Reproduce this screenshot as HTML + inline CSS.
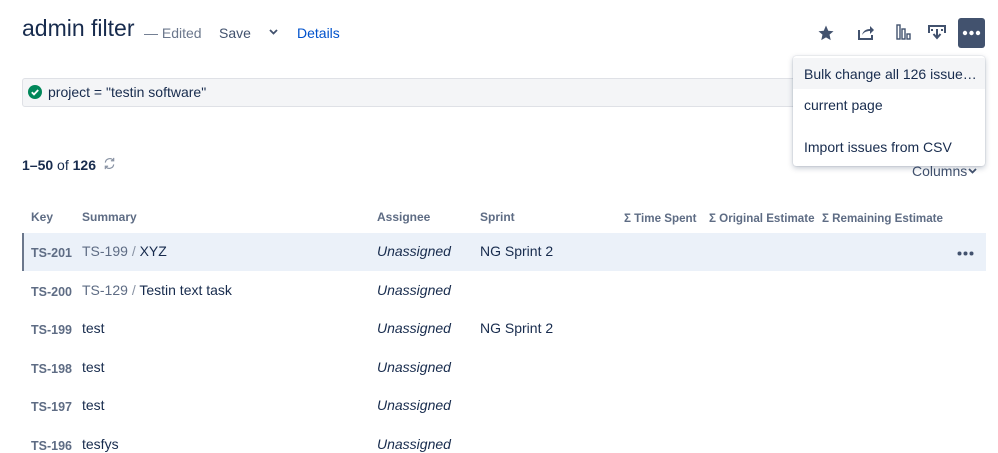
<!DOCTYPE html>
<html><head><style>
*{margin:0;padding:0;box-sizing:border-box}
body{width:998px;height:444px;overflow:hidden;background:#fff;font-family:"Liberation Sans",sans-serif;color:#172b4d;position:relative}
.a{position:absolute;white-space:nowrap}
.k{font-size:12.5px;color:#5e6c84;font-weight:bold}
.s{font-size:14px}
.u{font-size:14px;font-style:italic}
.h{font-size:12px;color:#5e6c84;font-weight:bold}
.h2{font-size:11.6px;color:#5e6c84;font-weight:bold}
</style></head><body>
<div class="a" style="left:22px;top:15px;font-size:23px;color:#172b4d">admin filter</div>
<div class="a" style="left:144px;top:25px;font-size:14px;color:#6b778c">— Edited</div>
<div class="a" style="left:219px;top:25px;font-size:14px;color:#42526e">Save</div>
<svg class="a" style="left:269px;top:29px" width="9" height="6" viewBox="0 0 9 6"><path d="M1 1l3.5 3.5L8 1" stroke="#42526e" stroke-width="1.8" fill="none"/></svg>
<div class="a" style="left:297px;top:25px;font-size:14px;color:#0052cc">Details</div>

<svg class="a" style="left:817px;top:24px" width="18" height="18" viewBox="0 0 24 24"><path d="M12 2l3 7 7 .6-5.3 4.6 1.6 7.3L12 17.8 5.7 21.5l1.6-7.3L2 9.6 9 9z" fill="#42526e"/></svg>
<svg class="a" style="left:857px;top:24px" width="18" height="17" viewBox="0 0 18 17"><path d="M2 6v9h13v-4" stroke="#42526e" stroke-width="2" fill="none"/><path d="M5 11c1-4 4-6 8-6V2l4 4-4 4V7c-3 0-6 1-8 4z" fill="#42526e"/></svg>
<svg class="a" style="left:896px;top:24px" width="16" height="16" viewBox="0 0 16 16"><g stroke="#42526e" stroke-width="1.4" fill="none"><rect x="1" y="1" width="3" height="14"/><rect x="6" y="5" width="3" height="10"/><rect x="11" y="10" width="3" height="5"/></g></svg>
<svg class="a" style="left:928px;top:24px" width="18" height="17" viewBox="0 0 18 17"><path d="M1 9V2h16v7M5 6h-2M15 6h-2" stroke="#42526e" stroke-width="2" fill="none"/><path d="M9 5v8M5.5 10L9 14l3.5-4" stroke="#42526e" stroke-width="2" fill="none"/></svg>
<div class="a" style="left:958px;top:18px;width:27px;height:30px;background:#42526e;border-radius:3px"></div>
<svg class="a" style="left:962px;top:30px" width="19" height="6" viewBox="0 0 19 6"><g fill="#fff"><circle cx="3" cy="3" r="2.2"/><circle cx="9.5" cy="3" r="2.2"/><circle cx="16" cy="3" r="2.2"/></g></svg>

<div class="a" style="left:22px;top:78px;width:780px;height:29px;background:#f4f5f7;border:1px solid #dfe1e6;border-radius:3px"></div>
<svg class="a" style="left:28px;top:85px" width="14" height="14" viewBox="0 0 14 14"><circle cx="7" cy="7" r="7" fill="#00875a"/><path d="M3.8 7.2l2.2 2.2 4.2-4.4" stroke="#fff" stroke-width="1.8" fill="none"/></svg>
<div class="a" style="left:48px;top:84px;font-size:14px">project = "testin software"</div>

<div class="a" style="left:22px;top:157px;font-size:14px"><b>1–50</b> of <b>126</b></div>
<svg class="a" style="left:103px;top:157px" width="13" height="13" viewBox="0 0 14 14"><path d="M2.5 6a4.8 4.8 0 0 1 8.5-2.5M11.5 8a4.8 4.8 0 0 1-8.5 2.5" stroke="#8993a4" stroke-width="1.3" fill="none"/><path d="M11.5 1v3h-3M2.5 13v-3h3" stroke="#8993a4" stroke-width="1.3" fill="none"/></svg>
<div class="a" style="left:912px;top:163px;font-size:14px;color:#42526e">Columns</div>
<svg class="a" style="left:968px;top:168px" width="9" height="6" viewBox="0 0 9 6"><path d="M1 1l3.5 3.5L8 1" stroke="#42526e" stroke-width="1.8" fill="none"/></svg>

<div class="a h" style="left:31px;top:210px">Key</div>
<div class="a h" style="left:82px;top:210px">Summary</div>
<div class="a h" style="left:377px;top:210px">Assignee</div>
<div class="a h" style="left:480px;top:210px">Sprint</div>
<div class="a h2" style="left:624px;top:212px">Σ Time Spent</div>
<div class="a h2" style="left:709px;top:212px">Σ Original Estimate</div>
<div class="a h2" style="left:822px;top:212px">Σ Remaining Estimate</div>

<div class="a" style="left:22px;top:233px;width:964px;height:38px;background:#ebf1f9;border-left:2px solid #6b778c"></div>
<div class="a k" style="left:31px;top:246px">TS-201</div><div class="a s" style="left:82px;top:243px"><span style="color:#5e6c84">TS-199</span> <span style="color:#8993a4">/</span> XYZ</div><div class="a u" style="left:377px;top:243px">Unassigned</div><div class="a s" style="left:480px;top:243px">NG Sprint 2</div>
<svg class="a" style="left:957px;top:251px" width="17" height="5" viewBox="0 0 17 5"><g fill="#42526e"><circle cx="2.5" cy="2.5" r="2"/><circle cx="8.5" cy="2.5" r="2"/><circle cx="14.5" cy="2.5" r="2"/></g></svg>
<div class="a k" style="left:31px;top:285px">TS-200</div><div class="a s" style="left:82px;top:282px"><span style="color:#5e6c84">TS-129</span> <span style="color:#8993a4">/</span> Testin text task</div><div class="a u" style="left:377px;top:282px">Unassigned</div>
<div class="a k" style="left:31px;top:323px">TS-199</div><div class="a s" style="left:82px;top:320px">test</div><div class="a u" style="left:377px;top:320px">Unassigned</div><div class="a s" style="left:480px;top:320px">NG Sprint 2</div>
<div class="a k" style="left:31px;top:362px">TS-198</div><div class="a s" style="left:82px;top:359px">test</div><div class="a u" style="left:377px;top:359px">Unassigned</div>
<div class="a k" style="left:31px;top:400px">TS-197</div><div class="a s" style="left:82px;top:397px">test</div><div class="a u" style="left:377px;top:397px">Unassigned</div>
<div class="a k" style="left:31px;top:439px">TS-196</div><div class="a s" style="left:82px;top:436px">tesfys</div><div class="a u" style="left:377px;top:436px">Unassigned</div>

<div class="a" style="left:793px;top:56px;width:192px;height:110px;background:#fff;border-radius:3px;box-shadow:0 2px 6px rgba(9,30,66,.25),0 0 1px rgba(9,30,66,.3)"></div>
<div class="a" style="left:793px;top:58px;width:192px;height:31px;background:#f4f5f7"></div>
<div class="a s" style="left:804px;top:66px">Bulk change all 126 issue…</div>
<div class="a s" style="left:804px;top:97px">current page</div>
<div class="a s" style="left:804px;top:139px">Import issues from CSV</div>
</body></html>
